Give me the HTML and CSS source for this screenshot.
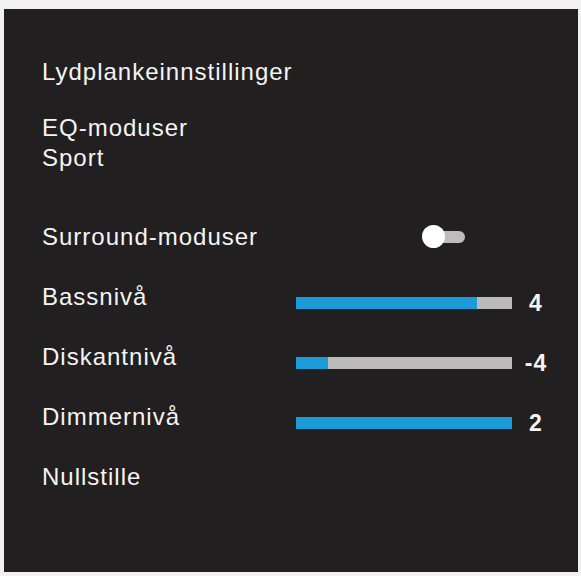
FILE: index.html
```html
<!DOCTYPE html>
<html lang="no">
<head>
<meta charset="utf-8">
<title>Lydplankeinnstillinger</title>
<link rel="stylesheet" href="styles.css">
</head>
<body>
<div class="panel">
  <div class="title">Lydplankeinnstillinger</div>
  <div class="eq">
    <div class="line">EQ-moduser</div>
    <div class="line">Sport</div>
  </div>
  <div class="rows">
    <div class="row">
      <div class="label">Surround-moduser</div>
      <div class="control">
        <div class="toggle"><span class="knob"></span></div>
      </div>
    </div>
    <div class="row">
      <div class="label">Bassnivå</div>
      <div class="control shifted">
        <div class="bar"><div class="fill" style="width:84%"></div></div>
        <div class="value">4</div>
      </div>
    </div>
    <div class="row">
      <div class="label">Diskantnivå</div>
      <div class="control shifted">
        <div class="bar"><div class="fill" style="width:15%"></div></div>
        <div class="value">-4</div>
      </div>
    </div>
    <div class="row">
      <div class="label">Dimmernivå</div>
      <div class="control shifted">
        <div class="bar"><div class="fill" style="width:100%"></div></div>
        <div class="value">2</div>
      </div>
    </div>
    <div class="row">
      <div class="label">Nullstille</div>
    </div>
  </div>
</div>
</body>
</html>
```

FILE: styles.css
```css
html, body {
  margin: 0;
  padding: 0;
}
body {
  background: #f1f1f1;
  width: 581px;
  height: 576px;
  overflow: hidden;
}
.panel {
  box-sizing: border-box;
  margin: 9px 3px 0 4px;
  height: 563px;
  background: #221f20;
  color: #f4f4f4;
  font-family: "Liberation Sans", Arial, sans-serif;
  font-size: 24px;
  letter-spacing: 1px;
  line-height: 30px;
  padding: 48px 0 0 38px;
}
.title {
  height: 30px;
}
.eq {
  margin-top: 26px;
}
.line {
  height: 30px;
}
.rows {
  margin-top: 34px;
}
.row {
  display: grid;
  grid-template-columns: 254px 1fr;
  height: 60px;
  align-items: center;
}
.control {
  display: flex;
  align-items: center;
}
.shifted {
  padding-top: 12px;
}
.toggle {
  position: relative;
  margin-left: 127px;
  width: 42px;
  height: 12px;
  display: flex;
  align-items: center;
}
.toggle::before {
  content: "";
  display: block;
  margin-left: 10px;
  width: 32px;
  height: 12px;
  border-radius: 6px;
  background: #bdbdbd;
}
.knob {
  position: absolute;
  left: -1px;
  top: -6px;
  width: 23px;
  height: 23px;
  border-radius: 50%;
  background: #ffffff;
}
.bar {
  width: 216px;
  height: 12px;
  background: #bababa;
}
.fill {
  height: 100%;
  background: #1b9bd7;
}
.value {
  width: 44px;
  margin-left: 2px;
  text-align: center;
  font-size: 23px;
  font-weight: bold;
  letter-spacing: 1px;
}
```
